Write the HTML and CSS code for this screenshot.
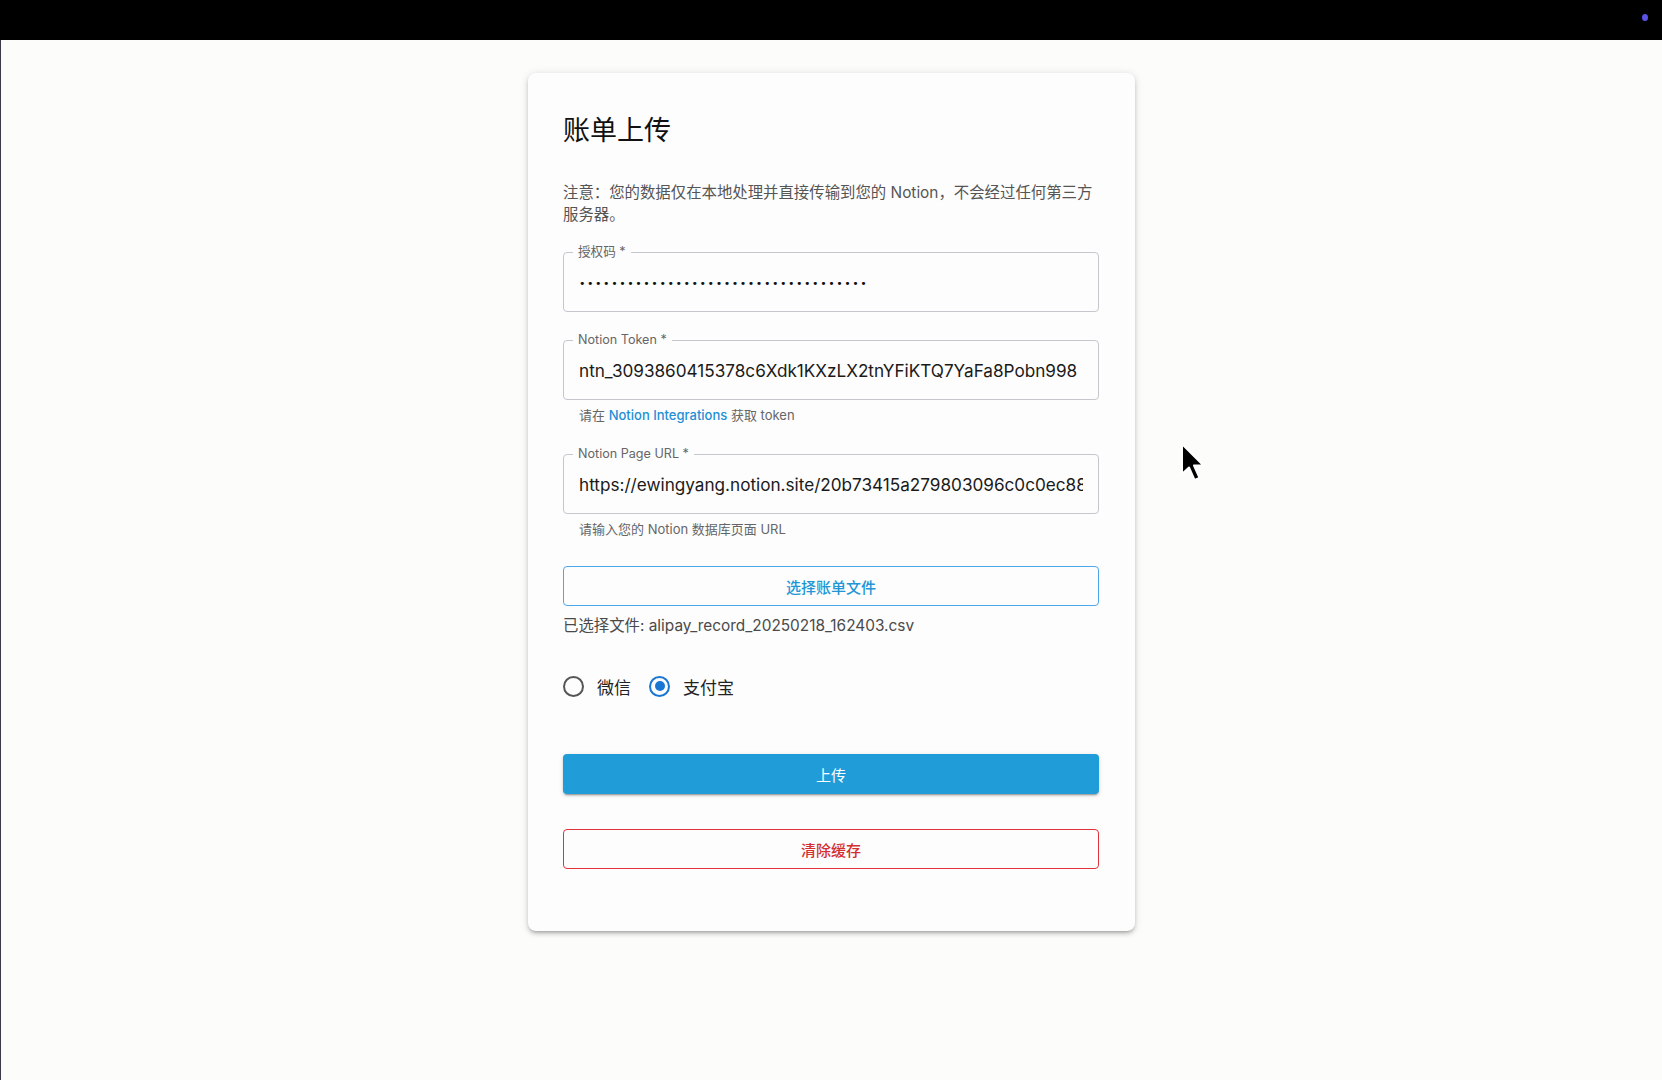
FILE: index.html
```html
<!DOCTYPE html>
<html lang="zh-CN">
<head>
<meta charset="utf-8">
<title>账单上传</title>
<link rel="stylesheet" href="styles.css">
</head>
<body>
<div class="topbar"><span class="topdot"></span></div>
<main class="page">
  <section class="card">
    <h1 class="title">账单上传</h1>
    <p class="note">注意：您的数据仅在本地处理并直接传输到您的 Notion，不会经过任何第三方服务器。</p>

    <div class="field">
      <span class="field-label">授权码 *</span>
      <div class="field-box"><span class="dots">••••••••••••••••••••••••••••••••••••</span></div>
    </div>

    <div class="field">
      <span class="field-label">Notion Token *</span>
      <div class="field-box"><span class="field-value">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</span></div>
    </div>
    <p class="helper">请在 <a class="link" href="#">Notion Integrations</a> 获取 token</p>

    <div class="field field-url">
      <span class="field-label">Notion Page URL *</span>
      <div class="field-box"><span class="field-value">https://ewingyang.notion.site/20b73415a279803096c0c0ec885b1a2f</span></div>
    </div>
    <p class="helper">请输入您的 Notion 数据库页面 URL</p>

    <button class="btn btn-outline" type="button">选择账单文件</button>
    <p class="file-name">已选择文件: alipay_record_20250218_162403.csv</p>

    <div class="radio-row">
      <label class="radio"><span class="radio-icon"></span><span class="radio-text">微信</span></label>
      <label class="radio"><span class="radio-icon checked"></span><span class="radio-text">支付宝</span></label>
    </div>

    <button class="btn btn-primary" type="button">上传</button>
    <button class="btn btn-danger" type="button">清除缓存</button>
  </section>
  <svg class="cursor" width="28" height="42" viewBox="0 0 28 42">
    <path d="M3 2 L3 32 L10 25.5 L15.5 38 L20.5 35.8 L15 23.5 L24.5 23.5 Z" fill="#000" stroke="#fff" stroke-width="2" stroke-linejoin="round"/>
  </svg>
</main>
</body>
</html>
```

FILE: styles.css
```css
* { box-sizing: border-box; }

html, body {
  margin: 0;
  padding: 0;
}

body {
  background: #fcfcfa;
  font-family: Inter, "Noto Sans CJK SC", sans-serif;
  color: #1f1f1f;
  min-height: 1080px;
}

.topbar {
  height: 40px;
  background: #000;
  display: flex;
  justify-content: flex-end;
  align-items: flex-start;
  padding: 14px 14px 0 0;
}

.topdot {
  width: 6px;
  height: 7px;
  border-radius: 50%;
  background: #5b52e6;
}

.page {
  position: relative;
  min-height: 1040px;
  border-left: 1px solid #3a3a4a;
  display: flex;
  justify-content: center;
  align-items: flex-start;
  padding-top: 33px;
}

.card {
  width: 607px;
  height: 858px;
  background: #fdfdfd;
  border-radius: 8px;
  box-shadow: 0 3px 3px -2px rgba(0,0,0,0.2), 0 3px 4px 0 rgba(0,0,0,0.14), 0 1px 8px 0 rgba(0,0,0,0.12);
  padding: 38px 36px 0 35px;
  display: flex;
  flex-direction: column;
}

.title {
  margin: 0;
  font-family: "Noto Sans CJK SC", sans-serif;
  font-weight: 400;
  font-size: 27px;
  line-height: 36px;
  color: #111;
}

.note {
  margin: 35px 0 0;
  font-size: 15.4px;
  line-height: 22px;
  color: #555;
}

.field {
  position: relative;
  margin-top: 26px;
}

.field-url { margin-top: 29px; }

.field + .field { margin-top: 28px; }

.field-box {
  height: 60px;
  border: 1px solid #c6c6cf;
  border-radius: 4px;
  padding: 0 15px;
  display: flex;
  align-items: center;
}

.field-label {
  position: absolute;
  left: 10px;
  top: -9px;
  padding: 0 5px;
  background: #fdfdfd;
  font-size: 12.6px;
  line-height: 17px;
  color: #666;
}

.field-value {
  flex: 1;
  min-width: 0;
  overflow: hidden;
  font-size: 17.15px;
  color: #1a1a1a;
  white-space: nowrap;
}

.dots {
  font-family: "DejaVu Sans", sans-serif;
  font-size: 11px;
  letter-spacing: 1.55px;
  color: #111;
  white-space: nowrap;
  margin-top: 3px;
}

.helper {
  margin: 5px 0 0 16px;
  font-size: 13px;
  line-height: 20px;
  color: #666;
}

.link {
  color: #1f8fd6;
  text-decoration: none;
  font-weight: 500;
}

.btn {
  display: block;
  width: 100%;
  height: 40px;
  border-radius: 4px;
  font-family: Inter, "Noto Sans CJK SC", sans-serif;
  font-size: 15px;
  font-weight: 500;
  cursor: pointer;
}

.btn-outline {
  margin-top: 27px;
  background: #fdfdfd;
  border: 1px solid #4ea7ea;
  color: #2096d6;
}

.file-name {
  margin: 9px 0 0;
  font-size: 15.4px;
  line-height: 22px;
  color: #4a4a4a;
}

.radio-row {
  margin-top: 28px;
  height: 42px;
  display: flex;
  align-items: center;
  gap: 18px;
}

.radio {
  display: flex;
  align-items: center;
  gap: 13px;
}

.radio-icon {
  width: 21px;
  height: 21px;
  border: 2px solid #555;
  border-radius: 50%;
  display: flex;
  align-items: center;
  justify-content: center;
}

.radio-icon.checked {
  border-color: #1976d2;
}

.radio-icon.checked::after {
  content: "";
  width: 10px;
  height: 10px;
  border-radius: 50%;
  background: #1976d2;
}

.radio-text {
  font-family: "Noto Sans CJK SC", sans-serif;
  font-size: 17px;
  color: #222;
}

.btn-primary {
  margin-top: 47px;
  background: #209dd8;
  border: none;
  color: #fff;
  font-weight: 400;
  box-shadow: 0 3px 1px -2px rgba(0,0,0,0.2), 0 2px 2px 0 rgba(0,0,0,0.14), 0 1px 5px 0 rgba(0,0,0,0.12);
}

.btn-danger {
  margin-top: 35px;
  background: #fdfdfd;
  border: 1px solid #e0313d;
  color: #d32f2f;
}

.cursor {
  position: absolute;
  left: 1178px;
  top: 402px;
}
```
